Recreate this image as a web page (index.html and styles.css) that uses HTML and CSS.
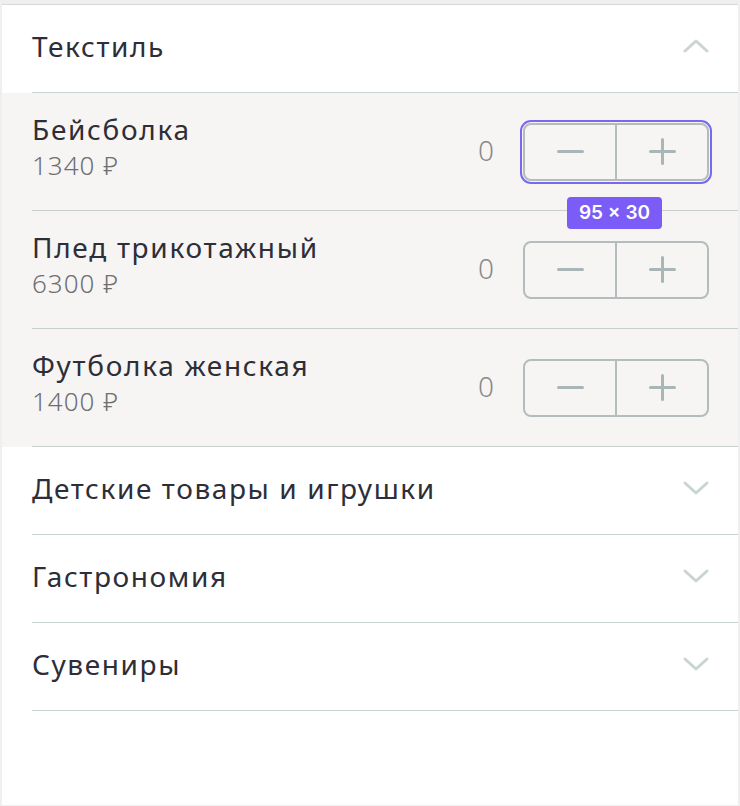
FILE: index.html
```html
<!DOCTYPE html>
<html lang="ru">
<head>
<meta charset="utf-8">
<link rel="stylesheet" href="styles.css">
</head>
<body>
<div class="panel">
  <div class="cat cat-open">
    <div class="cat-head">
      <span class="cat-title">Текстиль</span>
      <svg class="chev" width="26" height="14" viewBox="0 0 26 14"><path d="M2 12 L13 2 L24 12" fill="none" stroke="#c9d5d3" stroke-width="3" stroke-linecap="round" stroke-linejoin="round"/></svg>
    </div>
    <div class="items">
      <div class="item">
        <div class="info">
          <div class="name">Бейсболка</div>
          <div class="price">1340 ₽</div>
        </div>
        <div class="qty">0</div>
        <div class="stepper-wrap">
          <div class="stepper">
            <div class="btn"><span class="minus"></span></div>
            <div class="btn"><span class="plus"></span></div>
          </div>
          <div class="badge">95 × 30</div>
        </div>
      </div>
      <div class="item">
        <div class="info">
          <div class="name">Плед трикотажный</div>
          <div class="price">6300 ₽</div>
        </div>
        <div class="qty">0</div>
        <div class="stepper">
          <div class="btn"><span class="minus"></span></div>
          <div class="btn"><span class="plus"></span></div>
        </div>
      </div>
      <div class="item">
        <div class="info">
          <div class="name">Футболка женская</div>
          <div class="price">1400 ₽</div>
        </div>
        <div class="qty">0</div>
        <div class="stepper">
          <div class="btn"><span class="minus"></span></div>
          <div class="btn"><span class="plus"></span></div>
        </div>
      </div>
    </div>
  </div>
  <div class="cat">
    <div class="cat-head">
      <span class="cat-title">Детские товары и игрушки</span>
      <svg class="chev" width="26" height="14" viewBox="0 0 26 14"><path d="M2 2 L13 12 L24 2" fill="none" stroke="#c9d5d3" stroke-width="3" stroke-linecap="round" stroke-linejoin="round"/></svg>
    </div>
  </div>
  <div class="cat">
    <div class="cat-head">
      <span class="cat-title">Гастрономия</span>
      <svg class="chev" width="26" height="14" viewBox="0 0 26 14"><path d="M2 2 L13 12 L24 2" fill="none" stroke="#c9d5d3" stroke-width="3" stroke-linecap="round" stroke-linejoin="round"/></svg>
    </div>
  </div>
  <div class="cat">
    <div class="cat-head">
      <span class="cat-title">Сувениры</span>
      <svg class="chev" width="26" height="14" viewBox="0 0 26 14"><path d="M2 2 L13 12 L24 2" fill="none" stroke="#c9d5d3" stroke-width="3" stroke-linecap="round" stroke-linejoin="round"/></svg>
    </div>
  </div>
</div>
</body>
</html>
```

FILE: styles.css
```css
html, body {
  margin: 0;
  padding: 0;
  height: 100%;
}
body {
  background: #efefef;
  font-family: "Noto Sans", "DejaVu Sans", sans-serif;
  color: #2e2e38;
  padding-top: 4px;
  padding-left: 2px;
  padding-right: 2px;
  box-sizing: border-box;
}
.panel {
  background: #ffffff;
  border-top: 1px solid #d6d9d9;
  min-height: 801px;
  box-sizing: border-box;
}
.cat-head {
  display: flex;
  align-items: center;
  justify-content: space-between;
  height: 88px;
  box-sizing: border-box;
  padding-bottom: 6px;
  margin-left: 30px;
  padding-right: 29px;
  border-bottom: 1px solid #c9d3d2;
}
.cat-title {
  font-size: 28px;
  letter-spacing: 1.6px;
}
.chev {
  display: block;
}
.items {
  background: #f6f5f3;
}
.item {
  display: flex;
  align-items: center;
  height: 117px;
  margin-left: 30px;
  padding-right: 29px;
  border-bottom: 1px solid #c9cfcf;
}
.info {
  flex: 1;
  margin-top: -10px;
}
.name {
  font-size: 28px;
  line-height: 36px;
  letter-spacing: 1.7px;
}
.price {
  font-size: 26px;
  line-height: 36px;
  letter-spacing: 1px;
  font-weight: 300;
  color: #6f6f72;
}
.qty {
  font-size: 28px;
  font-weight: 300;
  color: #8a8a8a;
  margin-right: 29px;
  margin-top: -4px;
}
.stepper-wrap {
  position: relative;
}
.stepper {
  display: flex;
  width: 186px;
  height: 58px;
  box-sizing: border-box;
  border: 2px solid #b3bdbe;
  border-radius: 8px;
}
.stepper-wrap .stepper {
  outline: 2px solid #7b66f5;
  outline-offset: 1px;
}
.btn {
  flex: 1;
  display: flex;
  align-items: center;
  justify-content: center;
  position: relative;
}
.btn + .btn {
  border-left: 2px solid #b3bdbe;
}
.minus, .plus {
  position: relative;
  width: 27px;
  height: 3px;
  background: #a9b5b6;
  border-radius: 2px;
}
.plus::after {
  content: "";
  position: absolute;
  left: 12px;
  top: -12px;
  width: 3px;
  height: 27px;
  background: #a9b5b6;
  border-radius: 2px;
}
.badge {
  position: absolute;
  left: 44px;
  top: 74px;
  width: 95px;
  height: 32px;
  background: #7c5cf6;
  color: #ffffff;
  border-radius: 4px;
  font-family: "Inter", "Liberation Sans", sans-serif;
  font-size: 19px;
  font-weight: 600;
  display: flex;
  align-items: center;
  justify-content: center;
}
```
